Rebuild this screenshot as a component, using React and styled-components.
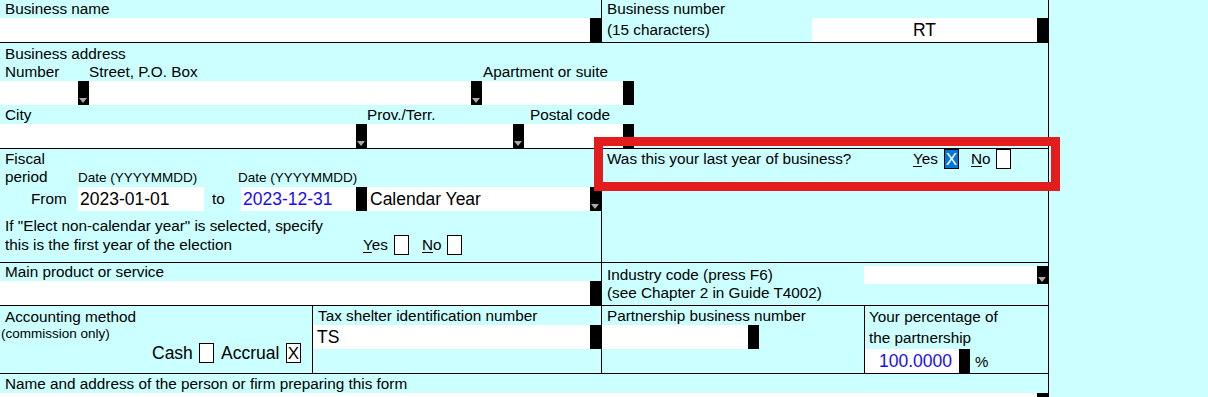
import React from "react";
import styled, { createGlobalStyle, css } from "styled-components";

const GlobalStyle = createGlobalStyle`
  html, body {
    margin: 0;
    padding: 0;
    overflow: hidden;
    background: #ccffff;
  }
  body {
    font-family: "Liberation Sans", Arial, sans-serif;
    color: #000;
  }
`;

const Page = styled.div`
  position: relative;
  width: 1208px;
  height: 397px;
  overflow: hidden;
  background: #ccffff;
`;

const Form = styled.div`
  width: 1049px;
  box-sizing: border-box;
  border-right: 1px solid #000;
`;

const Row = styled.div`
  display: grid;
  grid-template-columns: ${(p) => p.$cols || "1fr"};
  height: ${(p) => p.$h}px;
  box-sizing: border-box;
  border-bottom: ${(p) => (p.$last ? "none" : "1px solid #000")};
`;

const Cell = styled.div`
  display: flex;
  flex-direction: column;
  min-width: 0;
  padding-top: ${(p) => p.$top || 0}px;
  border-right: ${(p) => (p.$edge ? "1px solid #000" : "none")};
`;

const Label = styled.div`
  flex: ${(p) => (p.$grow ? "1" : "none")};
  width: ${(p) => (p.$w ? `${p.$w}px` : "auto")};
  height: ${(p) => p.$h || 18}px;
  line-height: ${(p) => p.$h || 18}px;
  padding-left: ${(p) => p.$pad || 0}px;
  font-size: ${(p) => p.$size || 15.3}px;
  white-space: nowrap;
  box-sizing: border-box;
`;

const Small = styled(Label)`
  font-size: 13.5px;
`;

const Line = styled.div`
  display: flex;
  align-items: ${(p) => p.$align || "center"};
  height: ${(p) => p.$h || 18}px;
  margin-top: ${(p) => p.$mt || 0}px;
  justify-content: ${(p) => (p.$end ? "flex-end" : "flex-start")};
  padding-right: ${(p) => p.$pr || 0}px;
`;

const Field = styled.div`
  display: flex;
  flex: none;
  height: ${(p) => p.$h || 24}px;
  width: ${(p) => (p.$w ? `${p.$w}px` : "auto")};
  margin-top: ${(p) => p.$mt || 0}px;
`;

const Input = styled.div`
  flex: ${(p) => (p.$w ? "none" : "1")};
  width: ${(p) => (p.$w ? `${p.$w}px` : "auto")};
  height: 100%;
  background: #fff;
  box-sizing: border-box;
  padding: 0 ${(p) => p.$pr || 0}px 0 ${(p) => p.$pl || 0}px;
  font-size: 17.5px;
  line-height: ${(p) => p.$lh || 24}px;
  color: ${(p) => (p.$blue ? "#1a0cf2" : "#000")};
  text-align: ${(p) => p.$align || "left"};
  white-space: nowrap;
  overflow: hidden;
`;

const Block = styled.span`
  position: relative;
  flex: none;
  width: 11px;
  height: 100%;
  background: #000;
  ${(p) =>
    p.$arrow &&
    css`
      &::after {
        content: "";
        position: absolute;
        left: 1px;
        bottom: 2px;
        border-left: 4.5px solid transparent;
        border-right: 4.5px solid transparent;
        border-top: 5px solid #a9a9a9;
      }
    `}
`;

const Check = styled.span`
  flex: none;
  display: inline-flex;
  align-items: center;
  justify-content: center;
  width: 15px;
  height: 20px;
  box-sizing: border-box;
  border: 1px solid #000;
  background: ${(p) => (p.$on ? "#0078d7" : "#fff")};
  color: ${(p) => (p.$on ? "#fff" : "#000")};
  font-size: 17px;
  line-height: 1;
`;

const Opt = styled.span`
  flex: none;
  width: ${(p) => p.$w}px;
  font-size: ${(p) => p.$size || 15.3}px;
  line-height: 20px;
  white-space: nowrap;
`;

const Gap = styled.span`
  flex: none;
  width: ${(p) => p.$w}px;
`;

const Key = styled.span`
  text-decoration: underline;
  text-underline-offset: 2px;
`;

const Column = styled.div`
  display: flex;
  flex-direction: column;
  flex: none;
  width: ${(p) => p.$w}px;
`;

const Group = styled.div`
  display: flex;
`;

const QuestionRow = styled.div`
  display: flex;
  align-items: flex-start;
  height: 35px;
  box-sizing: border-box;
  border-bottom: 1px solid #000;
  padding-left: 5px;
`;

const Percent = styled.span`
  margin-left: 5px;
  font-size: 15px;
  line-height: 26px;
`;

const Highlight = styled.div`
  position: absolute;
  left: 594px;
  top: 137px;
  width: 466px;
  height: 54px;
  box-sizing: border-box;
  border: 9px solid #e31d1d;
  pointer-events: none;
`;

function AddressField({ w, label, pad, lh, arrow, inputW }) {
  return (
    <Column $w={w}>
      <Label $h={lh} $pad={pad}>
        {label}
      </Label>
      <Field>
        <Input />
        <Block $arrow={arrow} />
      </Field>
    </Column>
  );
}

export default function App() {
  return (
    <Page>
      <GlobalStyle />
      <Form>
        <Row $h={43} $cols="602px 1fr">
          <Cell $edge>
            <Label $pad={5}>Business name</Label>
            <Field>
              <Input />
              <Block />
            </Field>
          </Cell>
          <Cell>
            <Label $pad={5}>Business number</Label>
            <Field>
              <Label $grow $h={24} $pad={5}>
                (15 characters)
              </Label>
              <Input $w={225} $align="center">
                RT
              </Input>
              <Block />
            </Field>
          </Cell>
        </Row>

        <Row $h={106}>
          <Cell $top={2}>
            <Label $pad={5}>Business address</Label>
            <Group>
              <AddressField w={89} label="Number" pad={5} arrow />
              <AddressField w={393} label="Street, P.O. Box" pad={0} arrow />
              <AddressField w={152} label="Apartment or suite" pad={1} />
            </Group>
            <Group>
              <AddressField w={367} label="City" pad={5} lh={19} arrow />
              <AddressField w={157} label="Prov./Terr." pad={0} lh={19} arrow />
              <AddressField w={110} label="Postal code" pad={6} lh={19} arrow />
            </Group>
          </Cell>
        </Row>

        <Row $h={114} $cols="602px 1fr">
          <Cell $edge $top={1}>
            <Label $pad={5}>Fiscal</Label>
            <Line $align="baseline">
              <Label $w={78} $pad={5}>
                period
              </Label>
              <Small $w={160}>Date (YYYYMMDD)</Small>
              <Small>Date (YYYYMMDD)</Small>
            </Line>
            <Field $mt={1}>
              <Label $w={78} $h={24} $pad={31}>
                From
              </Label>
              <Input $w={126} $pl={2}>
                2023-01-01
              </Input>
              <Label $w={37} $h={24} $pad={8}>
                to
              </Label>
              <Input $w={115} $pl={2} $blue>
                2023-12-31
              </Input>
              <Block />
              <Input $pl={3}>Calendar Year</Input>
              <Block $arrow />
            </Field>
            <Label $pad={5} style={{ marginTop: 6 }}>
              If "Elect non-calendar year" is selected, specify
            </Label>
            <Line $h={20}>
              <Label $w={363} $h={20} $pad={5}>
                this is the first year of the election
              </Label>
              <Opt $w={31}>
                <Key>Y</Key>es
              </Opt>
              <Check />
              <Gap $w={13} />
              <Opt $w={25}>
                <Key>N</Key>o
              </Opt>
              <Check />
            </Line>
          </Cell>
          <Cell>
            <QuestionRow>
              <Opt $w={306}>Was this your last year of business?</Opt>
              <Opt $w={31}>
                <Key>Y</Key>es
              </Opt>
              <Check $on>X</Check>
              <Gap $w={12} />
              <Opt $w={25}>
                <Key>N</Key>o
              </Opt>
              <Check />
            </QuestionRow>
          </Cell>
        </Row>

        <Row $h={43} $cols="602px 1fr">
          <Cell $edge>
            <Label $pad={5}>Main product or service</Label>
            <Field>
              <Input />
              <Block />
            </Field>
          </Cell>
          <Cell $top={3}>
            <Field $h={18}>
              <Label $grow $pad={5}>
                Industry code (press F6)
              </Label>
              <Input $w={173} />
              <Block $arrow />
            </Field>
            <Label $pad={5}>(see Chapter 2 in Guide T4002)</Label>
          </Cell>
        </Row>

        <Row $h={68} $cols="313px 289px 263px 1fr">
          <Cell $edge>
            <Label $h={21} $pad={5}>
              Accounting method
            </Label>
            <Small $h={14} $pad={1}>
              (commission only)
            </Small>
            <Line $h={20} $mt={2} $end $pr={11}>
              <Opt $w={47} $size={17.5}>
                Cash
              </Opt>
              <Check />
              <Gap $w={7} />
              <Opt $w={65} $size={17.5}>
                Accrual
              </Opt>
              <Check>X</Check>
            </Line>
          </Cell>
          <Cell $edge>
            <Label $h={19} $pad={5}>
              Tax shelter identification number
            </Label>
            <Field>
              <Input $pl={4}>TS</Input>
              <Block />
            </Field>
          </Cell>
          <Cell $edge>
            <Label $h={19} $pad={5}>
              Partnership business number
            </Label>
            <Field $w={157}>
              <Input />
              <Block />
            </Field>
          </Cell>
          <Cell>
            <Label $h={21} $pad={4}>
              Your percentage of
            </Label>
            <Label $h={22} $pad={4}>
              the partnership
            </Label>
            <Field>
              <Input $w={94} $pr={7} $align="right" $blue>
                100.0000
              </Input>
              <Block />
              <Percent>%</Percent>
            </Field>
          </Cell>
        </Row>

        <Row $h={43} $last>
          <Cell>
            <Label $h={19} $pad={5}>
              Name and address of the person or firm preparing this form
            </Label>
            <Field>
              <Input />
              <Block />
            </Field>
          </Cell>
        </Row>
      </Form>
      <Highlight />
    </Page>
  );
}
